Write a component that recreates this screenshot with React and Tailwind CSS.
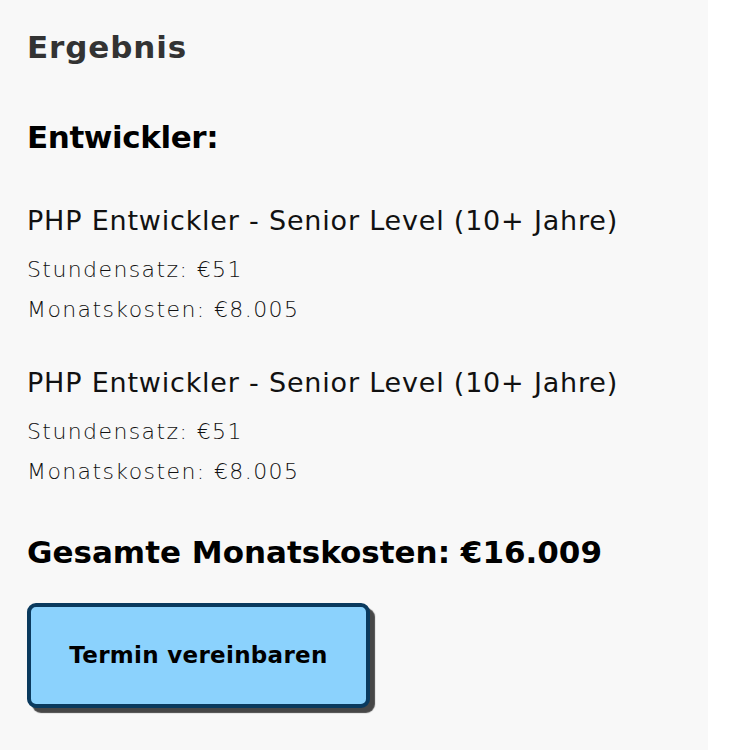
import React from 'react';

const developers = [
  { title: 'PHP Entwickler - Senior Level (10+ Jahre)', rate: '€51', monthly: '€8.005' },
  { title: 'PHP Entwickler - Senior Level (10+ Jahre)', rate: '€51', monthly: '€8.005' },
];

const App = () => {
  return (
    <div className="w-[750px] min-h-[750px] bg-white flex" style={{ fontFamily: '"DejaVu Sans", "Noto Sans", sans-serif' }}>
      <div className="w-[708px] min-h-[750px] bg-[#f8f8f8] px-[27px] pt-[27px]">
        <h2 className="text-[31px] leading-[40px] font-bold tracking-[0.9px] text-[#333]">Ergebnis</h2>
        <h3 className="mt-[50px] text-[31px] leading-[40px] font-bold tracking-[-0.4px] text-black">Entwickler:</h3>
        <div className="mt-[46px] flex flex-col gap-[35px]">
          {developers.map((dev, i) => (
            <div key={i}>
              <p className="text-[27px] leading-[36px] font-medium tracking-[0.8px] text-[#111]">{dev.title}</p>
              <p className="mt-[11px] text-[22px] leading-[40px] font-light tracking-[1.4px] text-[#111]">Stundensatz: {dev.rate}</p>
              <p className="text-[22px] leading-[40px] font-light tracking-[1.4px] text-[#111]">Monatskosten: {dev.monthly}</p>
            </div>
          ))}
        </div>
        <p className="mt-[40px] text-[31px] leading-[40px] font-bold text-black">Gesamte Monatskosten: €16.009</p>
        <button className="mt-[31px] w-[343px] h-[105px] rounded-[9px] border-[4px] border-[#0a3a5e] bg-[#8bd2fd] shadow-[5px_5px_1px_#474747] text-[23px] font-bold tracking-[0.3px] text-black">
          Termin vereinbaren
        </button>
      </div>
    </div>
  );
};

export default App;
